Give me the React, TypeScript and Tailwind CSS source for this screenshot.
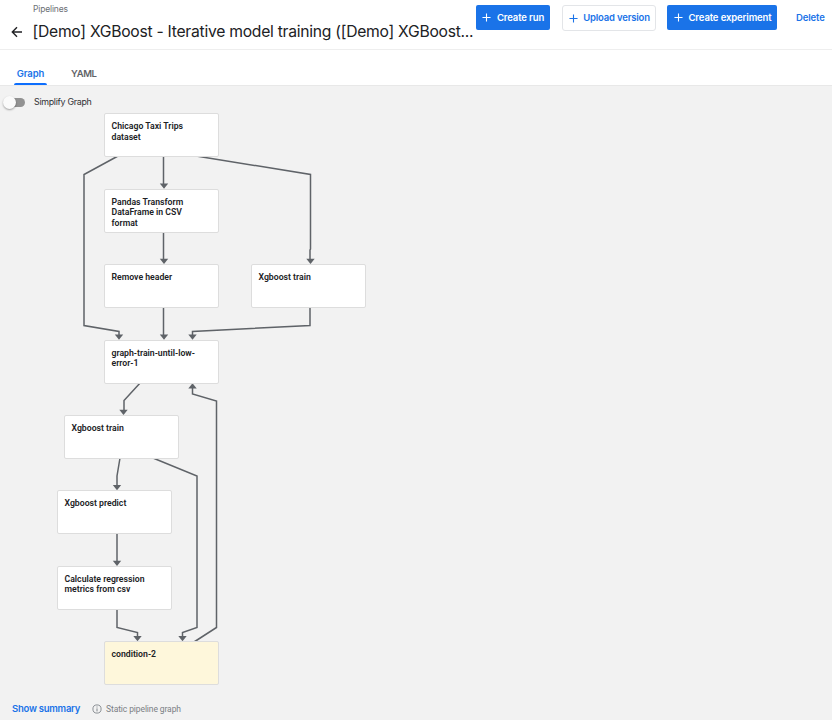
import React from "react";

type GraphNode = {
  label: string;
  x: number;
  y: number;
  lines: string[];
  highlighted?: boolean;
};

// Node positions are relative to the top left corner of the graph canvas.
const nodes: GraphNode[] = [
  { label: "dataset", x: 104, y: 27.4, lines: ["Chicago Taxi Trips", "dataset"] },
  { label: "pandas", x: 104, y: 103.2, lines: ["Pandas Transform", "DataFrame in CSV", "format"] },
  { label: "header", x: 104, y: 178.4, lines: ["Remove header"] },
  { label: "train", x: 251, y: 178.4, lines: ["Xgboost train"] },
  { label: "loop", x: 104, y: 254, lines: ["graph-train-until-low-", "error-1"] },
  { label: "train-loop", x: 64, y: 329.4, lines: ["Xgboost train"] },
  { label: "predict", x: 57, y: 404.4, lines: ["Xgboost predict"] },
  { label: "metrics", x: 57, y: 480, lines: ["Calculate regression", "metrics from csv"] },
  { label: "condition", x: 104, y: 555.2, lines: ["condition-2"], highlighted: true },
];

const edges = [
  "M118 156L84 174.500V325.500L119 331.500V335",
  "M163.500 156V185",
  "M193 155.500L310.500 174.500V249L310 250V260",
  "M163.500 232V260",
  "M163.500 307V335",
  "M310 307V325.500L192.500 331.500V335",
  "M141 382L124 400.500V411",
  "M120 458L117 476V486",
  "M153 458L197 476V627.500L182.500 632.500V637",
  "M117 533V562",
  "M117 609V627.500L137.500 632.500V637",
  "M194 642L216.500 627.500V401L192.500 394V388",
];

const arrows = [
  [119, 339.8], [164, 188.8], [310.5, 264], [164, 264], [164, 339.8], [192.5, 339.8],
  [123.5, 415], [117, 490.2], [182.5, 641.2], [117, 566], [137.5, 641.2],
];

function Plus() {
  return (
    <svg viewBox="0 0 10 10" className="size-[9px] shrink-0" fill="none" stroke="currentColor" strokeWidth="1.2">
      <path d="M5 .5V9.500M.5 5H9.500" />
    </svg>
  );
}

function Header() {
  return (
    <header className="flex h-[50px] border-b border-[#eeeeee]">
      <div className="w-[476px] shrink-0 pt-[3px]">
        <div className="ml-[33px] h-[12px] text-[8.5px] leading-[12px] tracking-[-0.15px] text-[#6b7075]">Pipelines</div>
        <div className="flex h-[32px] items-center">
          <svg viewBox="0 0 12 12" className="ml-[11px] mr-[9.5px] mt-[2px] size-[12px] shrink-0" fill="none" stroke="#202124" strokeWidth="1.4">
            <path d="M11 6H1.500M6 1.300L1.300 6L6 10.700" />
          </svg>
          <h1 className="whitespace-nowrap pt-[2px] text-[15.7px] leading-[22px] tracking-[-0.27px] text-[#202124]">
            [Demo] XGBoost - Iterative model training ([Demo] XGBoost...
          </h1>
        </div>
      </div>
      <div className="flex items-start whitespace-nowrap pt-[5px] text-[9.5px] font-semibold tracking-[-0.12px] text-[#1a73e8]">
        <button className="flex h-[25px] w-[74px] items-center justify-center gap-[6px] rounded-[2px] bg-[#1a73e8] text-white">
          <Plus /><span className="pt-[1px]">Create run</span>
        </button>
        <button className="ml-[12px] flex h-[26px] w-[94px] items-center justify-center gap-[5px] rounded-[3px] border border-[#e3e5e8] pl-[1px] tracking-[-0.18px]">
          <Plus />Upload version
        </button>
        <button className="ml-[11px] flex h-[25px] w-[110px] items-center justify-center gap-[5px] rounded-[2px] bg-[#1a73e8] pl-[2px] text-white">
          <Plus /><span className="pt-[1px]">Create experiment</span>
        </button>
        <button className="ml-[19px] h-[25px] pt-[1px]">Delete</button>
      </div>
    </header>
  );
}

export default function App() {
  return (
    <div className="flex h-[720px] w-[832px] flex-col overflow-hidden bg-white font-['Inter','Roboto',sans-serif]">
      <Header />
      <nav className="flex h-[36px] items-end border-b border-[#e8e8e8] pl-[14px] text-[9.5px] font-semibold tracking-[-0.1px]">
        <button className="flex h-[22px] w-[33px] flex-col items-center justify-between text-[#1a73e8]">
          <span className="pt-[1px] leading-[20px]">Graph</span>
          <span className="-mt-[1px] h-[2px] w-full shrink-0 rounded-t-[2px] bg-[#0d6efd]" />
        </button>
        <button className="ml-[24px] flex h-[22px] items-start pt-[1px] leading-[20px] tracking-[-0.4px] text-[#5f6368]">YAML</button>
      </nav>
      <main className="relative h-[634px] bg-[#f2f2f2]">
        <div className="flex h-[32px] items-center pl-[4px]">
          <span className="relative h-[9px] w-[21px] rounded-full bg-[#929292]">
            <span className="absolute -left-[1px] -top-[2px] size-[13px] rounded-full bg-[#fafafa] shadow-[0_1px_2px_rgba(0,0,0,0.35)]" />
          </span>
          <span className="ml-[9px] whitespace-nowrap text-[8.9px] tracking-[-0.3px] text-[#303134]">Simplify Graph</span>
        </div>
        <svg className="absolute left-0 top-0 h-[634px] w-[832px]" viewBox="0 86 832 634">
          <g fill="none" stroke="#5f6368" strokeWidth="1.5">
            {edges.map((d) => <path key={d} d={d} />)}
          </g>
          <g fill="#5f6368">
            {arrows.map(([x, y]) => (
              <path key={`${x}-${y}`} d={`M${x - 4.2} ${y - 5.2}H${x + 4.2}L${x} ${y}Z`} />
            ))}
            <path d="M188.300 388.600H196.700L192.500 383.300Z" />
          </g>
        </svg>
        {nodes.map((node) => (
          <div
            key={node.label}
            className={`absolute h-[43.5px] w-[115px] whitespace-nowrap rounded-[2px] border border-[#dddddd] pl-[6.5px] pt-[6.6px] font-['Roboto',sans-serif] text-[8.7px] font-semibold leading-[10.6px] text-[#202124] ${node.highlighted ? "bg-[#fef7db]" : "bg-white"}`}
            style={{ left: node.x, top: node.y }}
          >
            {node.lines.map((line) => <div key={line}>{line}</div>)}
          </div>
        ))}
        <footer className="absolute bottom-0 left-0 flex h-[24px] items-center whitespace-nowrap pl-[12px]">
          <button className="w-[68px] pt-[2px] text-left text-[9.5px] font-semibold tracking-[-0.25px] text-[#1a73e8]">Show summary</button>
          <svg viewBox="0 0 10 10" className="ml-[12px] mt-[1px] size-[10px]" fill="none" stroke="#80868b">
            <circle cx="5" cy="5" r="4.100" strokeWidth=".9" />
            <path d="M5 4.400V7.400M5 2.500V3.500" />
          </svg>
          <span className="ml-[4px] pt-[2px] font-['Roboto',sans-serif] text-[8.5px] tracking-[-0.1px] text-[#7b8085]">Static pipeline graph</span>
        </footer>
      </main>
    </div>
  );
}
